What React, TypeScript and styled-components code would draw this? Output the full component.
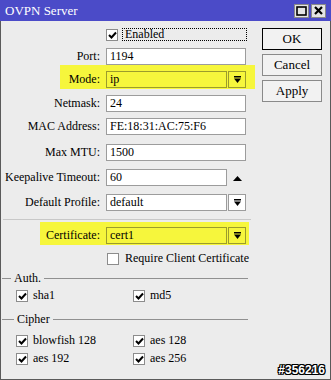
import React from "react";
import styled, { createGlobalStyle } from "styled-components";

const Global = createGlobalStyle`
  html, body { margin: 0; padding: 0; background: #ececec; }
  * { box-sizing: border-box; }
`;

const Window = styled.div`
  position: relative;
  width: 331px;
  height: 380px;
  background: #ececec;
  border-left: 1px solid #5a5a5a;
  border-right: 1px solid #5a5a5a;
  border-bottom: 1px solid #5a5a5a;
  font-family: "Liberation Serif", "Times New Roman", serif;
  font-size: 12px;
  color: #000;
  display: flex;
  flex-direction: column;
`;

const TitleBar = styled.div`
  height: 21px;
  margin: 0 -1px;
  background: #4b4bc8;
  color: #fff;
  display: flex;
  align-items: center;
  padding: 0 5px 0 5px;
  font-size: 13px;
`;

const TitleText = styled.div`
  flex: 1;
  padding-top: 1px;
`;

const TitleButtons = styled.div`
  display: flex;
  gap: 2px;
`;

const TitleBtn = styled.div`
  width: 15px;
  height: 14px;
  background: #e4e4e4;
  border: 1px solid #8a8a8a;
  display: flex;
  align-items: center;
  justify-content: center;
`;

const Body = styled.div`
  flex: 1;
  display: flex;
`;

const Form = styled.div`
  width: 254px;
  display: flex;
  flex-direction: column;
`;

const Row = styled.div<{ $mt: number }>`
  margin-top: ${(p) => p.$mt}px;
  display: grid;
  grid-template-columns: 99px 140px;
  column-gap: 6px;
  align-items: center;
`;

const Highlight = styled.div<{ $mt: number; $left: number; $right: number; $pt: number }>`
  margin-top: ${(p) => p.$mt}px;
  margin-left: ${(p) => p.$left}px;
  width: ${(p) => p.$right - p.$left}px;
  padding-top: ${(p) => p.$pt}px;
  padding-bottom: 1px;
  background: #f6f63c;
  display: grid;
  grid-template-columns: ${(p) => 99 - p.$left}px 140px;
  column-gap: 6px;
  align-items: center;
`;

const Label = styled.div`
  text-align: right;
  white-space: nowrap;
`;

const Field = styled.div<{ $hl?: boolean }>`
  height: 17px;
  border: 1px solid ${(p) => (p.$hl ? "#9c9c2c" : "#9c9c9c")};
  background: ${(p) => (p.$hl ? "transparent" : "#fff")};
  padding: 0 3px;
  line-height: 15px;
  white-space: nowrap;
  overflow: hidden;
`;

const FieldGroup = styled.div`
  display: flex;
  gap: 1px;
`;

const GrowField = styled(Field)`
  width: 121px;
`;

const DropBtn = styled.div<{ $hl?: boolean }>`
  width: 18px;
  height: 17px;
  border: 1px solid ${(p) => (p.$hl ? "#9c9c2c" : "#9c9c9c")};
  background: ${(p) => (p.$hl ? "transparent" : "#fff")};
  display: flex;
  align-items: center;
  justify-content: center;
`;

const SpinUp = styled.div`
  width: 18px;
  height: 17px;
  display: flex;
  align-items: center;
  justify-content: center;
  padding-top: 1px;
`;

const CheckRow = styled.div<{ $mt: number; $left: number }>`
  margin-top: ${(p) => p.$mt}px;
  padding-left: ${(p) => p.$left}px;
  display: flex;
  align-items: center;
  gap: 4px;
  height: 13px;
`;

const Box = styled.div`
  width: 12px;
  height: 12px;
  border: 1px solid #8c8c8c;
  background: #fff;
  display: flex;
  align-items: center;
  justify-content: center;
  flex: none;
`;

const FocusLabel = styled.div`
  width: 125px;
  height: 13px;
  border: 1px dotted #000;
  line-height: 11px;
  padding-left: 2px;
`;

const CheckText = styled.span`
  margin-left: 2px;
  white-space: nowrap;
`;

const Separator = styled.div<{ $mt: number }>`
  margin-top: ${(p) => p.$mt}px;
  margin-left: 2px;
  width: 248px;
  height: 1px;
  background: #c8c8c8;
`;

const GroupHeader = styled.div<{ $mt: number }>`
  margin-top: ${(p) => p.$mt}px;
  height: 14px;
  width: 247px;
  display: flex;
  align-items: center;
  gap: 3px;
`;

const GroupLine = styled.div<{ $w?: number }>`
  height: 1px;
  background: #909090;
  flex: ${(p) => (p.$w ? `0 0 ${p.$w}px` : "1 1 auto")};
  margin-left: ${(p) => (p.$w ? 1 : 0)}px;
  margin-top: 1px;
`;

const Pair = styled.div<{ $mt: number }>`
  margin-top: ${(p) => p.$mt}px;
  display: grid;
  grid-template-columns: 117px 120px;
  padding-left: 15px;
  height: 12px;
  align-items: center;
`;

const CheckItem = styled.div`
  display: flex;
  align-items: center;
  gap: 5px;
  white-space: nowrap;
`;

const Buttons = styled.div`
  margin-left: 7px;
  padding-top: 7px;
  display: flex;
  flex-direction: column;
  gap: 4px;
`;

const Btn = styled.div<{ $default?: boolean }>`
  width: 60px;
  height: 22px;
  border: 1px solid ${(p) => (p.$default ? "#000" : "#8a8a8a")};
  background: #f2f2f2;
  display: flex;
  align-items: center;
  justify-content: center;
  font-size: 13px;
`;

const Watermark = styled.div`
  position: absolute;
  right: 5px;
  bottom: 2px;
  font-family: "Liberation Sans", Arial, sans-serif;
  font-weight: bold;
  font-size: 12px;
  color: #fff;
  text-shadow: 1px 0 0 #000, -1px 0 0 #000, 0 1px 0 #000, 0 -1px 0 #000,
    1px 1px 0 #000, -1px -1px 0 #000, 1px -1px 0 #000, -1px 1px 0 #000;
`;

const Check = () => (
  <svg width="9" height="8" viewBox="0 0 9 8">
    <path d="M1 4 L3.5 6.5 L8 1.5" stroke="#000" strokeWidth="2" fill="none" />
  </svg>
);

const DropIcon = () => (
  <svg width="7" height="7" viewBox="0 0 7 7">
    <rect x="0" y="0" width="7" height="1.5" fill="#000" />
    <path d="M0 2.5 L7 2.5 L3.5 7 Z" fill="#000" />
  </svg>
);

const UpIcon = () => (
  <svg width="9" height="5" viewBox="0 0 9 5">
    <path d="M0 5 L9 5 L4.5 0 Z" fill="#000" />
  </svg>
);

const CheckBox = ({ on }: { on?: boolean }) => <Box>{on && <Check />}</Box>;

export default function App() {
  return (
    <>
      <Global />
      <Window>
        <TitleBar>
          <TitleText>OVPN Server</TitleText>
          <TitleButtons>
            <TitleBtn>
              <svg width="11" height="10" viewBox="0 0 11 10">
                <rect x="1" y="1" width="9" height="8" stroke="#000" strokeWidth="1.6" fill="none" />
              </svg>
            </TitleBtn>
            <TitleBtn>
              <svg width="9" height="9" viewBox="0 0 9 9">
                <path d="M1 1 L8 8 M8 1 L1 8" stroke="#000" strokeWidth="2.2" />
              </svg>
            </TitleBtn>
          </TitleButtons>
        </TitleBar>
        <Body>
          <Form>
            <CheckRow $mt={7} $left={105}>
              <CheckBox on />
              <FocusLabel>Enabled</FocusLabel>
            </CheckRow>
            <Row $mt={7}>
              <Label>Port:</Label>
              <Field>1194</Field>
            </Row>
            <Highlight $mt={0} $left={59} $right={254} $pt={6}>
              <Label>Mode:</Label>
              <FieldGroup>
                <GrowField $hl>ip</GrowField>
                <DropBtn $hl>
                  <DropIcon />
                </DropBtn>
              </FieldGroup>
            </Highlight>
            <Row $mt={6}>
              <Label>Netmask:</Label>
              <Field>24</Field>
            </Row>
            <Row $mt={6}>
              <Label>MAC Address:</Label>
              <Field>FE:18:31:AC:75:F6</Field>
            </Row>
            <Row $mt={9}>
              <Label>Max MTU:</Label>
              <Field>1500</Field>
            </Row>
            <Row $mt={8}>
              <Label>Keepalive Timeout:</Label>
              <FieldGroup>
                <GrowField>60</GrowField>
                <SpinUp>
                  <UpIcon />
                </SpinUp>
              </FieldGroup>
            </Row>
            <Row $mt={8}>
              <Label>Default Profile:</Label>
              <FieldGroup>
                <GrowField>default</GrowField>
                <DropBtn>
                  <DropIcon />
                </DropBtn>
              </FieldGroup>
            </Row>
            <Separator $mt={8} />
            <Highlight $mt={2} $left={39} $right={248} $pt={5}>
              <Label>Certificate:</Label>
              <FieldGroup>
                <GrowField $hl>cert1</GrowField>
                <DropBtn $hl>
                  <DropIcon />
                </DropBtn>
              </FieldGroup>
            </Highlight>
            <CheckRow $mt={7} $left={106}>
              <CheckBox />
              <CheckText>Require Client Certificate</CheckText>
            </CheckRow>
            <GroupHeader $mt={6}>
              <GroupLine $w={9} />
              <span>Auth.</span>
              <GroupLine />
            </GroupHeader>
            <Pair $mt={3}>
              <CheckItem>
                <CheckBox on />
                sha1
              </CheckItem>
              <CheckItem>
                <CheckBox on />
                md5
              </CheckItem>
            </Pair>
            <GroupHeader $mt={12}>
              <GroupLine $w={12} />
              <span>Cipher</span>
              <GroupLine />
            </GroupHeader>
            <Pair $mt={7}>
              <CheckItem>
                <CheckBox on />
                blowfish 128
              </CheckItem>
              <CheckItem>
                <CheckBox on />
                aes 128
              </CheckItem>
            </Pair>
            <Pair $mt={6}>
              <CheckItem>
                <CheckBox on />
                aes 192
              </CheckItem>
              <CheckItem>
                <CheckBox on />
                aes 256
              </CheckItem>
            </Pair>
          </Form>
          <Buttons>
            <Btn $default>OK</Btn>
            <Btn>Cancel</Btn>
            <Btn>Apply</Btn>
          </Buttons>
        </Body>
        <Watermark>#356216</Watermark>
      </Window>
    </>
  );
}
